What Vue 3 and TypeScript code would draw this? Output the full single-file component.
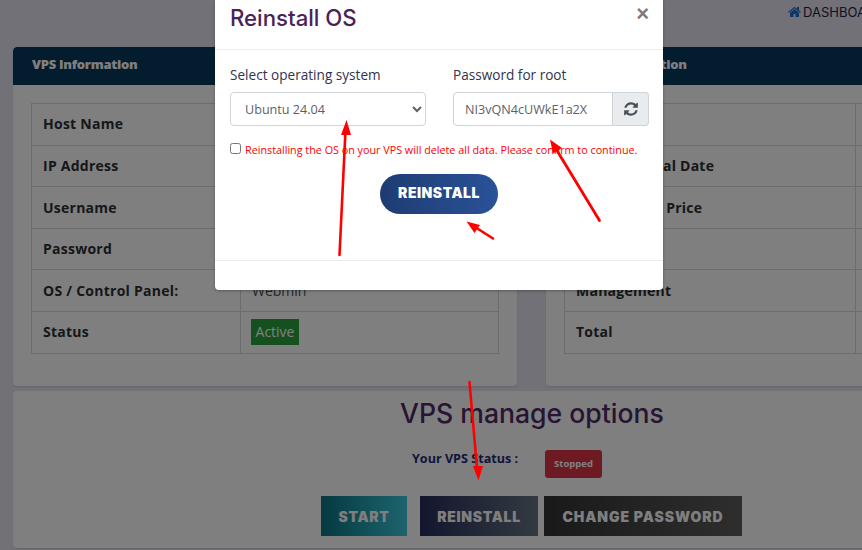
<script setup lang="ts">
const leftRows: { label: string; value: string }[] = [
  { label: 'Host Name', value: 'vps.example.com' },
  { label: 'IP Address', value: '192.0.2.10' },
  { label: 'Username', value: 'root' },
  { label: 'Password', value: '••••••••' },
  { label: 'OS / Control Panel:', value: 'Webmin' },
  { label: 'Status', value: 'Active' }
]
const rightRows: string[] = ['Plan', 'Next Renewal Date', 'Yearly Total Price', 'Cycle', 'Management', 'Total']
</script>

<template>
  <div class="page">
    <div class="content">
      <div class="crumb">
        <svg class="home" viewBox="0 0 1664 1792"><path fill="currentColor" d="M1408 992v480q0 26-19 45t-45 19h-384v-384h-256v384h-384q-26 0-45-19t-19-45v-480q0-1 .5-3t.5-3l575-474 575 474q1 2 1 6zm223-69l-62 74q-8 9-21 11h-3q-13 0-21-7l-692-577-692 577q-12 8-24 7-13-2-21-11l-62-74q-8-10-7-23.5t11-21.5l719-599q32-26 76-26t76 26l244 204v-195q0-14 9-23t23-9h192q14 0 23 9t9 23v408l219 182q10 8 11 21.5t-7 23.5z"/></svg>
        <span>DASHBOARD</span>
      </div>
      <div class="cards">
        <section class="card">
          <h3 class="card-head">VPS Information</h3>
          <div class="card-body">
            <table class="info left">
              <tbody>
                <tr v-for="r in leftRows" :key="r.label">
                  <th>{{ r.label }}</th>
                  <td><span v-if="r.label === 'Status'" class="active">{{ r.value }}</span><template v-else>{{ r.value }}</template></td>
                </tr>
              </tbody>
            </table>
          </div>
        </section>
        <section class="card">
          <h3 class="card-head">Billing Information</h3>
          <div class="card-body">
            <table class="info right">
              <tbody>
                <tr v-for="r in rightRows" :key="r">
                  <th>{{ r }}</th>
                  <td></td>
                </tr>
              </tbody>
            </table>
          </div>
        </section>
      </div>
      <section class="manage">
        <h2 class="manage-title">VPS manage options</h2>
        <div class="status-row">
          <span class="status-label">Your VPS Status :</span>
          <span class="stopped">Stopped</span>
        </div>
        <div class="actions">
          <button class="act start">START</button>
          <button class="act re">REINSTALL</button>
          <button class="act change">CHANGE PASSWORD</button>
        </div>
      </section>
    </div>

    <div class="backdrop"></div>

    <div class="modal">
      <header class="modal-head">
        <h4 class="modal-title">Reinstall OS</h4>
        <span class="close">×</span>
      </header>
      <div class="modal-body">
        <div class="fields">
          <div class="field">
            <label class="lbl">Select operating system</label>
            <select class="ctl sel">
              <option>Ubuntu 24.04</option>
            </select>
          </div>
          <div class="field">
            <label class="lbl">Password for root</label>
            <div class="group">
              <input class="ctl pw" value="NI3vQN4cUWkE1a2X" />
              <span class="addon">
                <svg class="refresh" viewBox="0 0 1536 1792"><path fill="currentColor" d="M1511 1056q0 5-1 7-64 268-268 434.5t-478 166.5q-146 0-282.5-55t-243.5-157l-129 129q-19 19-45 19t-45-19-19-45v-448q0-26 19-45t45-19h448q26 0 45 19t19 45-19 45l-137 137q71 66 161 102t187 36q134 0 250-65t186-179q11-17 53-117 8-23 30-23h192q13 0 22.5 9.5t9.5 22.5zm25-800v448q0 26-19 45t-45 19h-448q-26 0-45-19t-19-45 19-45l138-138q-148-137-349-137-134 0-250 65t-186 179q-11 17-53 117-8 23-30 23h-199q-13 0-22.5-9.5t-9.5-22.5v-7q65-268 270-434.5t480-166.5q146 0 284 55.5t245 156.5l130-129q19-19 45-19t45 19 19 45z"/></svg>
              </span>
            </div>
          </div>
        </div>
        <div class="confirm">
          <input type="checkbox" class="chk" />
          <span class="warn">Reinstalling the OS on your VPS will delete all data. Please confirm to continue.</span>
        </div>
        <div class="submit-wrap">
          <button class="submit">REINSTALL</button>
        </div>
      </div>
      <footer class="modal-foot"></footer>
    </div>

    <svg class="arrows" viewBox="0 0 862 550" width="862" height="550">
      <g fill="#ff0000" stroke="#ff0000">
        <line x1="339.5" y1="255" x2="345.5" y2="130" stroke-width="2.6" stroke-linecap="round" />
        <polygon points="346.5,120 351,135 341,135" stroke="none" />
        <line x1="599.5" y1="220.5" x2="556" y2="149" stroke-width="2.8" stroke-linecap="round" />
        <polygon points="550,139.5 562,148 553,153.5" stroke="none" />
        <line x1="493" y1="238.5" x2="475" y2="227" stroke-width="2.6" stroke-linecap="round" />
        <polygon points="466.5,221.5 480,225 474.5,233" stroke="none" />
        <line x1="469.5" y1="382" x2="477" y2="468" stroke-width="2.6" stroke-linecap="round" />
        <polygon points="478.5,480.5 473,466 483,466" stroke="none" />
      </g>
    </svg>
  </div>
</template>

<style>
html, body { margin: 0; padding: 0; overflow: hidden; }
</style>

<style scoped>
.page {
  position: relative;
  width: 862px;
  height: 550px;
  overflow: hidden;
  background: #e4e3ee;
  font-family: "Open Sans", "Liberation Sans", sans-serif;
  font-size: 14px;
}
.content {
  width: 1038px;
  margin-left: 13px;
  display: flex;
  flex-direction: column;
}
.crumb {
  height: 47px;
  box-sizing: border-box;
  padding: 3px 0 0 775px;
  display: flex;
  align-items: flex-start;
  gap: 2px;
  font-family: Inter, "Liberation Sans", sans-serif;
  font-size: 13px;
  line-height: 18px;
  color: #1f2350;
  white-space: nowrap;
}
.home { width: 13px; height: 14px; margin-top: 2px; color: #1a6fd8; }
.cards {
  display: grid;
  grid-template-columns: 504px 504px;
  column-gap: 29px;
}
.card {
  background: #fff;
  border-radius: 4px;
  box-shadow: 0 1px 2px rgba(0, 0, 0, .12);
  height: 339px;
  overflow: hidden;
}
.card-head {
  margin: 0;
  height: 38px;
  padding: 0 19px;
  background: #083a5c;
  color: #fff;
  font-size: 13px;
  font-weight: 800;
  letter-spacing: -.27px;
  line-height: 35px;
  border-radius: 4px 4px 0 0;
}
.card-body { padding: 18px; }
.info {
  width: 468px;
  border-collapse: collapse;
  table-layout: fixed;
  color: #343a40;
}
.info tr { height: 41.62px; }
.info th, .info td {
  border: 1px solid #d9d9d9;
  padding: 0 11px;
  text-align: left;
  vertical-align: middle;
  line-height: 20px;
  white-space: nowrap;
}
.info th { font-weight: 700; color: #2c2f33; letter-spacing: .25px; }
.left th { width: 186px; }
.right { width: 500px; }
.right th { width: 268px; }
.info td { color: #4a4f55; }
.active {
  display: inline-block;
  box-sizing: border-box;
  width: 48px;
  height: 26px;
  margin-left: -1px;
  background: #2aa33c;
  color: #fff;
  line-height: 26px;
  text-align: center;
  vertical-align: middle;
}
.manage {
  margin-top: 5px;
  background: #fff;
  border-radius: 4px;
  box-shadow: 0 1px 2px rgba(0, 0, 0, .12);
  height: 157px;
  display: flex;
  flex-direction: column;
  align-items: center;
}
.manage-title {
  margin: 3px 0 0;
  height: 38px;
  font-family: Inter, "Liberation Sans", sans-serif;
  font-weight: 500;
  font-size: 26.6px;
  line-height: 38px;
  color: #4e2a66;
  white-space: nowrap;
}
.status-row {
  display: flex;
  align-items: flex-start;
  margin: 18px 50px 0 0;
  height: 28px;
}
.status-label {
  font-size: 12.6px;
  font-weight: 700;
  color: #1f2a78;
  line-height: 18px;
  width: 133px;
}
.stopped {
  width: 57px;
  height: 28px;
  background: #dc3545;
  border-radius: 3px;
  color: #fff;
  font-size: 9.5px;
  font-weight: 700;
  line-height: 28px;
  text-align: center;
}
.actions {
  display: flex;
  margin: 18px 1px 0 0;
}
.act {
  height: 40px;
  padding: 0;
  border: 0;
  color: #fff;
  font-family: Inter, "Liberation Sans", sans-serif;
  font-size: 14px;
  font-weight: 900;
  letter-spacing: .7px;
}
.start { width: 86px; background: linear-gradient(90deg, #0b7480, #3bc8dc); margin-right: 13px; }
.re { width: 118px; background: linear-gradient(90deg, #262d5c, #667482); margin-right: 6px; }
.change { width: 198px; background: linear-gradient(90deg, #333, #5c5c5c); letter-spacing: .95px; }
.backdrop {
  position: absolute;
  inset: 0;
  background: rgba(0, 0, 0, .5);
}
.modal {
  position: absolute;
  left: 215px;
  top: 0;
  width: 448px;
  height: 290px;
  background: #fff;
  border-radius: 0 0 4px 4px;
  display: flex;
  flex-direction: column;
  box-shadow: 0 1px 3px rgba(0, 0, 0, .3);
}
.modal-head {
  height: 50px;
  box-sizing: border-box;
  border-bottom: 1px solid #e9ecef;
  padding: 0 15px;
  display: flex;
  justify-content: space-between;
  align-items: flex-start;
}
.modal-title {
  margin: 2px 0 0;
  font-family: Inter, "Liberation Sans", sans-serif;
  font-size: 22.2px;
  font-weight: 500;
  line-height: 32px;
  color: #4b2258;
}
.close {
  font-family: "Liberation Sans", sans-serif;
  font-size: 22px;
  font-weight: 700;
  line-height: 28px;
  color: #7c7c7c;
  margin: 0 -1px 0 0;
}
.modal-body { flex: 1; padding: 15px 15px 0; box-sizing: border-box; }
.fields {
  display: grid;
  grid-template-columns: 196px 196px;
  column-gap: 27px;
}
.field { display: flex; flex-direction: column; }
.lbl {
  font-size: 13.6px;
  line-height: 20px;
  color: #30344f;
  margin-bottom: 7px;
}
.ctl {
  height: 34px;
  box-sizing: border-box;
  border: 1px solid #ced4da;
  border-radius: 4px;
  background: #fff;
  color: #5b6168;
  font-family: "Open Sans", sans-serif;
  font-size: 12.6px;
  padding: 0 11px;
  outline: none;
}
.sel { padding-left: 10px; font-size: 12.6px; }
.group { display: flex; }
.pw { width: 160px; border-radius: 4px 0 0 4px; }
.addon {
  width: 36px;
  height: 34px;
  box-sizing: border-box;
  border: 1px solid #ced4da;
  border-left: 0;
  border-radius: 0 4px 4px 0;
  background: #e9ecef;
  color: #495057;
  display: flex;
  align-items: center;
  justify-content: center;
}
.refresh { width: 14px; height: 16px; }
.confirm {
  display: flex;
  align-items: center;
  margin-top: 14px;
  height: 16px;
}
.chk { width: 11px; height: 11px; margin: 0 4px 0 0; }
.warn {
  color: #ff0000;
  font-size: 10.78px;
  line-height: 16px;
  margin-top: 3px;
  white-space: nowrap;
}
.submit-wrap { display: flex; justify-content: center; margin-top: 18px; }
.submit {
  width: 118px;
  height: 40px;
  border: 0;
  border-radius: 20px;
  padding: 0 0 3px;
  background: linear-gradient(90deg, #1e3c72, #2a5298);
  color: #fff;
  font-family: Inter, "Liberation Sans", sans-serif;
  font-size: 14px;
  font-weight: 900;
  letter-spacing: .5px;
}
.modal-foot {
  height: 30px;
  box-sizing: border-box;
  border-top: 1px solid #e9ecef;
}
.arrows { position: absolute; left: 0; top: 0; pointer-events: none; }
</style>
